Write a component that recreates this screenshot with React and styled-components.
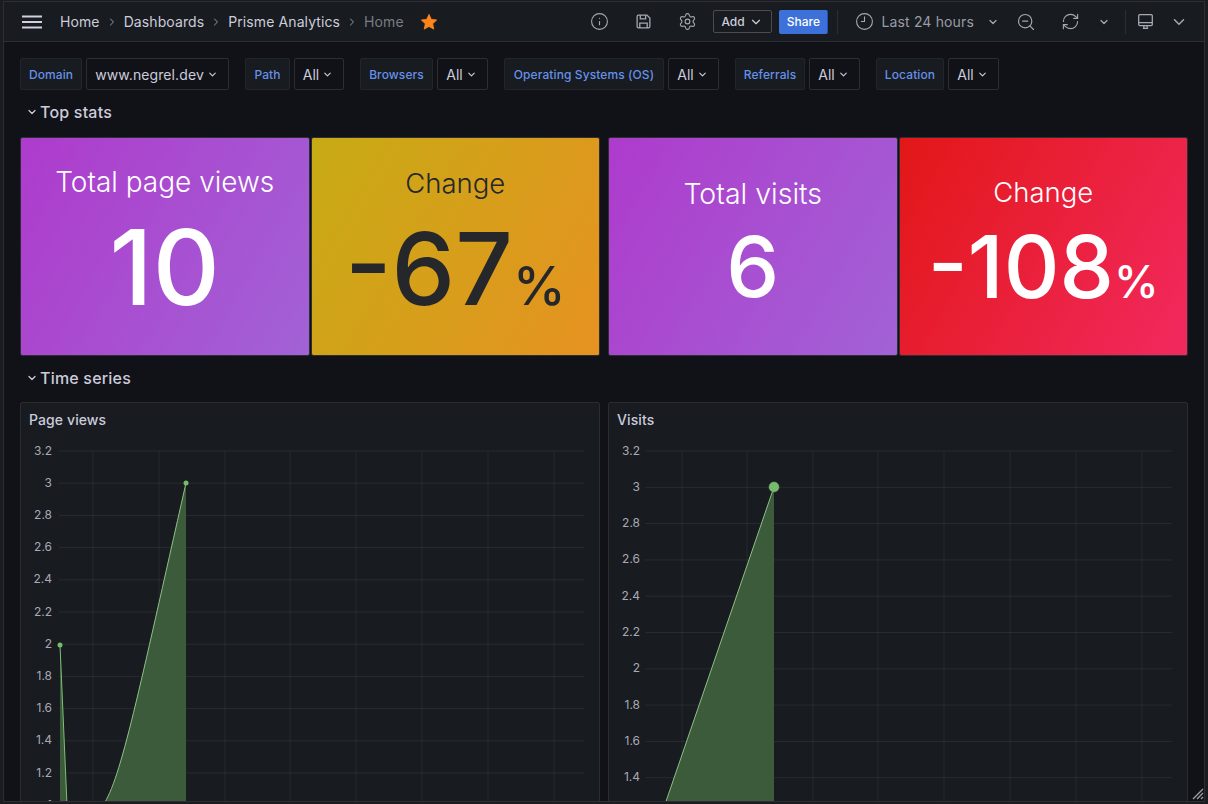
import styled, { createGlobalStyle } from "styled-components";
import { ChevronDown, ChevronRight, Info, Settings, Clock9, ZoomOut, RefreshCw } from "lucide-react";

const GlobalStyle = createGlobalStyle`
  html, body {
    margin: 0;
    padding: 0;
    background: #1b1c20;
    overflow: hidden;
  }
  * {
    box-sizing: border-box;
  }
`;

const Window = styled.div`
  position: relative;
  width: 1208px;
  height: 804px;
  padding: 1px 3px 2px 3px;
  font-family: Inter, "Noto Sans", sans-serif;
  color: #ccccdc;
`;

const Frame = styled.div`
  height: 100%;
  border: 1px solid #2c2e33;
  background: #111217;
  overflow: hidden;
`;

const Nav = styled.header`
  display: flex;
  align-items: center;
  height: 40px;
  padding: 0 17px 0 18px;
  background: #181b1f;
  border-bottom: 1px solid #2c2e33;
`;

const Burger = styled.svg`
  width: 20px;
  height: 14px;
  margin-right: 18px;
`;

const Crumbs = styled.nav`
  display: flex;
  align-items: center;
  font-size: 14px;
  letter-spacing: 0.1px;
  color: #ccccdc;
`;

const Crumb = styled.span`
  color: ${(p) => (p.$muted ? "#7a7c85" : "#ccccdc")};
`;

const CrumbSep = styled(ChevronRight)`
  width: 12px;
  height: 12px;
  margin: 0 6px;
  color: #9a9ca6;
`;

const Star = styled.svg`
  width: 18px;
  height: 18px;
  margin-left: 16px;
`;

const Spacer = styled.div`
  flex: 1;
`;

const IconSlot = styled.span`
  display: flex;
  align-items: center;
  justify-content: center;
  width: 16px;
  margin-left: ${(p) => p.$ml || 0}px;
  color: #a6a8b2;
  svg {
    display: block;
    flex: none;
  }
`;

const AddButton = styled.div`
  display: flex;
  align-items: center;
  gap: 4px;
  width: 59px;
  height: 23px;
  margin-left: 18px;
  padding-left: 7px;
  border: 1px solid #4a4c52;
  border-radius: 2px;
  font-size: 12px;
  font-weight: 500;
  color: #ccccdc;
`;

const ShareButton = styled.div`
  display: flex;
  align-items: center;
  justify-content: center;
  width: 49px;
  height: 24px;
  margin-left: 7px;
  border-radius: 2px;
  border-right: 1px solid #1f54c0;
  background: #3d71d9;
  font-size: 12px;
  font-weight: 500;
  color: #fff;
`;

const Divider = styled.div`
  width: 1px;
  height: 24px;
  margin: 0 ${(p) => p.$right || 10}px 0 ${(p) => p.$left || 9}px;
  background: #2c2e33;
`;

const TimeText = styled.span`
  margin-left: 9px;
  font-size: 14px;
  letter-spacing: 0.15px;
  color: #9a9ca6;
`;

const Content = styled.main`
  padding: 16px 16px 0 16px;
`;

const Variables = styled.div`
  display: flex;
  height: 32px;
  margin-bottom: 6px;
`;

const Variable = styled.div`
  display: flex;
  gap: 4px;
  margin-right: 16px;
`;

const VarLabel = styled.div`
  display: flex;
  align-items: center;
  justify-content: center;
  width: ${(p) => p.$w}px;
  border: 1px solid #22252b;
  border-radius: 2px;
  background: #181b1f;
  font-size: 12px;
  font-weight: 500;
  letter-spacing: 0.1px;
  color: #6591ea;
`;

const VarSelect = styled.div`
  display: flex;
  align-items: center;
  justify-content: center;
  gap: 3px;
  width: ${(p) => p.$w}px;
  padding-right: 2px;
  border: 1px solid #2c2e33;
  border-radius: 2px;
  background: #111217;
  font-size: 14px;
  letter-spacing: 0.1px;
  color: #ccccdc;
`;

const RowTitle = styled.h2`
  display: flex;
  align-items: center;
  height: 32px;
  margin: 0 0 ${(p) => p.$mb}px 0;
  padding-left: 6px;
  font-size: 16px;
  font-weight: 500;
  letter-spacing: 0.2px;
  color: #ccccdc;
  svg {
    margin-right: 2px;
  }
`;

const StatGrid = styled.section`
  display: grid;
  grid-template-columns: 580px 580px;
  gap: 8px;
  height: 219px;
  margin-bottom: 6px;
`;

const StatPair = styled.div`
  display: grid;
  grid-template-columns: 1fr 1fr;
  gap: 1px;
`;

const StatPanel = styled.div`
  display: flex;
  flex-direction: column;
  align-items: center;
  justify-content: center;
  border: 1px solid #2e2f35;
  border-radius: 2px;
  background: linear-gradient(120deg, ${(p) => p.$from}, ${(p) => p.$to});
  background-clip: padding-box;
  color: ${(p) => p.$ink};
`;

const StatTitle = styled.div`
  font-size: ${(p) => p.$size}px;
  font-weight: 300;
  line-height: 1.2;
  margin-bottom: ${(p) => p.$gap}px;
`;

const StatValue = styled.div`
  display: flex;
  align-items: baseline;
  font-size: ${(p) => p.$size}px;
  line-height: 1.15;
  font-weight: 500;
`;

const StatUnit = styled.span`
  font-size: ${(p) => p.$size}px;
  margin-left: ${(p) => p.$gap}px;
`;

const ChartGrid = styled.section`
  display: grid;
  grid-template-columns: 580px 580px;
  gap: 8px;
`;

const ChartPanel = styled.div`
  height: 500px;
  border: 1px solid #2a2c31;
  border-radius: 2px;
  background: #181b1f;
`;

const ChartTitle = styled.div`
  height: 32px;
  padding: 8px 8px 0 8px;
  font-size: 14px;
  font-weight: 500;
  line-height: 18px;
  letter-spacing: 0.1px;
  color: #ccccdc;
`;

const ChartSvg = styled.svg`
  display: block;
  width: 578px;
  height: 460px;
  text {
    font-family: Inter, "Noto Sans", sans-serif;
    font-size: 12px;
    fill: #a9aab6;
  }
`;

const ResizeHandle = styled.svg`
  position: absolute;
  right: 4px;
  bottom: 4px;
  width: 14px;
  height: 14px;
`;

const variables = [
  { label: "Domain", labelW: 62, value: "www.negrel.dev", valueW: 143 },
  { label: "Path", labelW: 45, value: "All", valueW: 50 },
  { label: "Browsers", labelW: 73, value: "All", valueW: 51 },
  { label: "Operating Systems (OS)", labelW: 160, value: "All", valueW: 51 },
  { label: "Referrals", labelW: 70, value: "All", valueW: 51 },
  { label: "Location", labelW: 68, value: "All", valueW: 51 },
];

const yLabels = ["3.2", "3", "2.8", "2.6", "2.4", "2.2", "2", "1.8", "1.6", "1.4", "1.2", "1"];

function Chart({ top, step, xLines, x0, x1, children }) {
  return (
    <ChartSvg viewBox="0 0 578 460">
      {xLines.map((x) => (
        <line key={x} x1={x} x2={x} y1={top} y2="460" stroke="#ffffff" strokeOpacity="0.06" />
      ))}
      {yLabels.map((label, i) => {
        const y = top + i * step;
        return (
          <g key={label}>
            <line x1={x0} x2={x1} y1={y} y2={y} stroke="#ffffff" strokeOpacity="0.07" />
            <text x="31" y={y + 3.5} textAnchor="end">
              {label}
            </text>
          </g>
        );
      })}
      {children}
    </ChartSvg>
  );
}

export default function App() {
  return (
    <>
      <GlobalStyle />
      <Window>
        <Frame>
          <Nav>
            <Burger viewBox="0 0 20 14">
              <path d="M0 1.5h20M0 7h20M0 12.5h20" stroke="#d0d1dc" strokeWidth="2" />
            </Burger>
            <Crumbs>
              <Crumb>Home</Crumb>
              <CrumbSep />
              <Crumb>Dashboards</Crumb>
              <CrumbSep />
              <Crumb>Prisme Analytics</Crumb>
              <CrumbSep />
              <Crumb $muted>Home</Crumb>
            </Crumbs>
            <Star viewBox="0 0 24 24">
              <path
                d="M12 1.8l3.1 6.6 7.2.9-5.3 5 1.4 7.2L12 18l-6.4 3.5L7 14.3l-5.3-5 7.2-.9z"
                fill="#ff851b"
                stroke="#ff851b"
                strokeLinejoin="round"
              />
            </Star>
            <Spacer />
            <IconSlot>
              <Info size={19} strokeWidth={1.4} />
            </IconSlot>
            <IconSlot $ml={28}>
              <svg width="17" height="17" viewBox="0 0 16 16" fill="none" stroke="currentColor" strokeWidth="1.2">
                <path d="M2 3.2c0-.7.5-1.2 1.2-1.2h8l2.8 2.8v8c0 .7-.5 1.2-1.2 1.2H3.2c-.7 0-1.2-.5-1.2-1.2z" />
                <path d="M5 2v3.5h5V2M4.5 14V9.5h7V14" />
              </svg>
            </IconSlot>
            <IconSlot $ml={28}>
              <Settings size={19} strokeWidth={1.4} />
            </IconSlot>
            <AddButton>
              Add
              <ChevronDown size={14} />
            </AddButton>
            <ShareButton>Share</ShareButton>
            <Divider />
            <IconSlot $ml={8}>
              <Clock9 size={19} strokeWidth={1.4} />
            </IconSlot>
            <TimeText>Last 24 hours</TimeText>
            <IconSlot $ml={11}>
              <ChevronDown size={12} strokeWidth={2.5} />
            </IconSlot>
            <IconSlot $ml={17}>
              <ZoomOut size={20} strokeWidth={1.4} />
            </IconSlot>
            <IconSlot $ml={28}>
              <RefreshCw size={19} strokeWidth={1.4} />
            </IconSlot>
            <IconSlot $ml={18}>
              <ChevronDown size={12} strokeWidth={2.5} />
            </IconSlot>
            <Divider $left={13} $right={11} />
            <IconSlot>
              <svg width="17" height="17" viewBox="0 0 16 16" fill="none" stroke="currentColor" strokeWidth="1.2">
                <path d="M2.6 1.6h10.8c.6 0 1 .4 1 1v8.2c0 .6-.4 1-1 1H2.6c-.6 0-1-.4-1-1V2.6c0-.6.4-1 1-1z" />
                <path d="M1.6 9h12.8M5.5 14.5h5M6.5 12v2.5M9.5 12v2.5" />
              </svg>
            </IconSlot>
            <IconSlot $ml={18}>
              <ChevronDown size={18} strokeWidth={2} />
            </IconSlot>
          </Nav>

          <Content>
            <Variables>
              {variables.map((v) => (
                <Variable key={v.label}>
                  <VarLabel $w={v.labelW}>{v.label}</VarLabel>
                  <VarSelect $w={v.valueW}>
                    {v.value}
                    <ChevronDown size={11} strokeWidth={2.5} />
                  </VarSelect>
                </Variable>
              ))}
            </Variables>

            <RowTitle $mb={9}>
              <ChevronDown size={12} strokeWidth={2.5} />
              Top stats
            </RowTitle>
            <StatGrid>
              <StatPair>
                <StatPanel $from="#ae3bcc" $to="#a262d6" $ink="#fff">
                  <StatTitle $size={28} $gap={8}>Total page views</StatTitle>
                  <StatValue $size={104}>10</StatValue>
                </StatPanel>
                <StatPanel $from="#c7ab14" $to="#e69221" $ink="#25272a">
                  <StatTitle $size={27.5} $gap={10}>Change</StatTitle>
                  <StatValue $size={101}>
                    -67<StatUnit $size={53} $gap={0}>%</StatUnit>
                  </StatValue>
                </StatPanel>
              </StatPair>
              <StatPair>
                <StatPanel $from="#ae3bcc" $to="#a262d6" $ink="#fff">
                  <StatTitle $size={28.5} $gap={8}>Total visits</StatTitle>
                  <StatValue $size={84}>6</StatValue>
                </StatPanel>
                <StatPanel $from="#e21717" $to="#f2295f" $ink="#fff">
                  <StatTitle $size={27.5} $gap={8}>Change</StatTitle>
                  <StatValue $size={86.5}>
                    -108<StatUnit $size={45} $gap={0}>%</StatUnit>
                  </StatValue>
                </StatPanel>
              </StatPair>
            </StatGrid>

            <RowTitle $mb={8}>
              <ChevronDown size={12} strokeWidth={2.5} />
              Time series
            </RowTitle>
            <ChartGrid>
              <ChartPanel>
                <ChartTitle>Page views</ChartTitle>
                <Chart top={16} step={32.2} x0={38} x1={563} xLines={[72, 138, 204, 269, 335, 401, 467, 533]}>
                  <path d="M39 210L46 370H39z" fill="#3b5b3b" />
                  <path d="M82 370C100 345 118 255 165 48V370z" fill="#3b5b3b" />
                  <path d="M39 210L46 370" stroke="#7fc078" fill="none" />
                  <path d="M82 370C100 345 118 255 165 48" stroke="#8fbf88" fill="none" />
                  <circle cx="39" cy="210" r="2.5" fill="#73bf69" />
                  <circle cx="165" cy="48" r="2.5" fill="#73bf69" />
                </Chart>
              </ChartPanel>
              <ChartPanel>
                <ChartTitle>Visits</ChartTitle>
                <Chart top={16} step={36.3} x0={36} x1={563} xLines={[73, 138, 204, 269, 335, 401, 467, 533]}>
                  <path d="M165 52L52 381H165z" fill="#3b5b3b" />
                  <path d="M165 52L52 381" stroke="#8fbf88" fill="none" />
                  <circle cx="165" cy="52" r="5" fill="#73bf69" stroke="#8a9a88" strokeOpacity="0.5" />
                </Chart>
              </ChartPanel>
            </ChartGrid>
          </Content>
        </Frame>
        <ResizeHandle viewBox="0 0 14 14">
          <path d="M13 3L3 13M13 7L7 13M13 11L11 13" stroke="#9a9ca6" strokeWidth="1.4" />
        </ResizeHandle>
      </Window>
    </>
  );
}
